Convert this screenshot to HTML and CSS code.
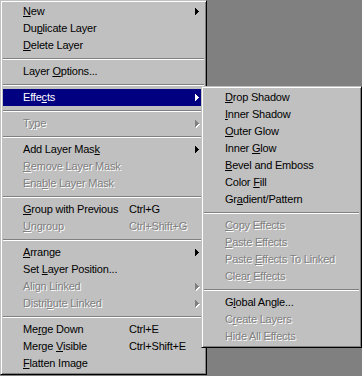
FILE: index.html
```html
<!DOCTYPE html>
<html>
<head>
<meta charset="utf-8">
<link rel="stylesheet" href="styles.css">
</head>
<body>
<div class="stage">
  <div class="menu main">
    <div class="item"><span class="label"><u>N</u>ew</span><span class="sc"></span><svg class="arrow" width="4" height="7" viewBox="0 0 4 7"><path d="M0 0h1v1h1v1h1v1h1v1h-1v1h-1v1h-1v1h-1z"/></svg></div>
    <div class="item"><span class="label">Du<u>p</u>licate Layer</span></div>
    <div class="item"><span class="label"><u>D</u>elete Layer</span></div>
    <div class="sep"></div>
    <div class="item"><span class="label">Layer <u>O</u>ptions...</span></div>
    <div class="sep"></div>
    <div class="item active"><span class="label">Effe<u>c</u>ts</span><span class="sc"></span><svg class="arrow" width="4" height="7" viewBox="0 0 4 7"><path d="M0 0h1v1h1v1h1v1h1v1h-1v1h-1v1h-1v1h-1z"/></svg></div>
    <div class="sep"></div>
    <div class="item off"><span class="label">T<u>y</u>pe</span><span class="sc"></span><svg class="arrow" width="4" height="7" viewBox="0 0 4 7"><path d="M0 0h1v1h1v1h1v1h1v1h-1v1h-1v1h-1v1h-1z"/></svg></div>
    <div class="sep"></div>
    <div class="item"><span class="label">Add Layer Mas<u>k</u></span><span class="sc"></span><svg class="arrow" width="4" height="7" viewBox="0 0 4 7"><path d="M0 0h1v1h1v1h1v1h1v1h-1v1h-1v1h-1v1h-1z"/></svg></div>
    <div class="item off"><span class="label"><u>R</u>emove Layer Mask</span></div>
    <div class="item off"><span class="label">Ena<u>b</u>le Layer Mask</span></div>
    <div class="sep"></div>
    <div class="item"><span class="label"><u>G</u>roup with Previous</span><span class="sc">Ctrl+G</span></div>
    <div class="item off"><span class="label"><u>U</u>ngroup</span><span class="sc">Ctrl+Shift+G</span></div>
    <div class="sep"></div>
    <div class="item"><span class="label"><u>A</u>rrange</span><span class="sc"></span><svg class="arrow" width="4" height="7" viewBox="0 0 4 7"><path d="M0 0h1v1h1v1h1v1h1v1h-1v1h-1v1h-1v1h-1z"/></svg></div>
    <div class="item"><span class="label">Set <u>L</u>ayer Position...</span></div>
    <div class="item off"><span class="label">Ali<u>g</u>n Linked</span><span class="sc"></span><svg class="arrow" width="4" height="7" viewBox="0 0 4 7"><path d="M0 0h1v1h1v1h1v1h1v1h-1v1h-1v1h-1v1h-1z"/></svg></div>
    <div class="item off"><span class="label">Distri<u>b</u>ute Linked</span><span class="sc"></span><svg class="arrow" width="4" height="7" viewBox="0 0 4 7"><path d="M0 0h1v1h1v1h1v1h1v1h-1v1h-1v1h-1v1h-1z"/></svg></div>
    <div class="sep"></div>
    <div class="item"><span class="label">Me<u>r</u>ge Down</span><span class="sc">Ctrl+E</span></div>
    <div class="item"><span class="label">Merge <u>V</u>isible</span><span class="sc">Ctrl+Shift+E</span></div>
    <div class="item"><span class="label"><u>F</u>latten Image</span></div>
  </div>

  <div class="menu sub">
    <div class="item"><span class="label"><u>D</u>rop Shadow</span></div>
    <div class="item"><span class="label"><u>I</u>nner Shadow</span></div>
    <div class="item"><span class="label"><u>O</u>uter Glow</span></div>
    <div class="item"><span class="label">Inner <u>G</u>low</span></div>
    <div class="item"><span class="label"><u>B</u>evel and Emboss</span></div>
    <div class="item"><span class="label">Color <u>F</u>ill</span></div>
    <div class="item"><span class="label">Gr<u>a</u>dient/Pattern</span></div>
    <div class="sep"></div>
    <div class="item off"><span class="label"><u>C</u>opy Effects</span></div>
    <div class="item off"><span class="label"><u>P</u>aste Effects</span></div>
    <div class="item off"><span class="label">Paste <u>E</u>ffects To Linked</span></div>
    <div class="item off"><span class="label">Clea<u>r</u> Effects</span></div>
    <div class="sep"></div>
    <div class="item"><span class="label">G<u>l</u>obal Angle...</span></div>
    <div class="item off"><span class="label">C<u>r</u>eate Layers</span></div>
    <div class="item off"><span class="label">Hide All Effects</span></div>
  </div>
</div>
</body>
</html>
```

FILE: styles.css
```css
html, body {
  margin: 0;
  padding: 0;
  background: #808080;
}

.stage {
  position: relative;
  width: 362px;
  height: 376px;
  overflow: hidden;
  font-family: "Liberation Sans", Arial, sans-serif;
  font-size: 11px;
  letter-spacing: -0.2px;
  color: #000;
}

.menu {
  box-sizing: border-box;
  background: #c0c0c0;
  border: 1px solid;
  border-color: #c0c0c0 #000 #000 #c0c0c0;
  box-shadow: inset 1px 1px 0 #fff, inset -1px -1px 0 #808080;
  padding: 2px;
  display: flex;
  flex-direction: column;
}

.main {
  width: 207px;
}

.sub {
  position: absolute;
  left: 201px;
  top: 86px;
  width: 161px;
}

.item {
  height: 17px;
  line-height: 17px;
  display: flex;
  align-items: center;
  white-space: nowrap;
}

.main .item {
  padding: 0 5px 0 20px;
}

.sub .item {
  padding: 0 5px 0 21px;
}

.main .label {
  width: 106px;
  flex: none;
}

.sc {
  flex: 1;
}

.arrow {
  flex: none;
  display: block;
  fill: currentColor;
  shape-rendering: crispEdges;
}

.item u {
  text-decoration: underline;
  text-underline-offset: 1px;
}

.item.active {
  background: #000080;
  color: #fff;
}

.item.off {
  color: #808080;
  text-shadow: 1px 1px 0 #fff;
}

.item.off .arrow {
  filter: drop-shadow(1px 1px 0 #fff);
}

.sep {
  height: 9px;
  box-sizing: border-box;
  padding-top: 4px;
}

.sep::before {
  content: "";
  display: block;
  height: 1px;
  background: #808080;
  border-bottom: 1px solid #fff;
}
```
